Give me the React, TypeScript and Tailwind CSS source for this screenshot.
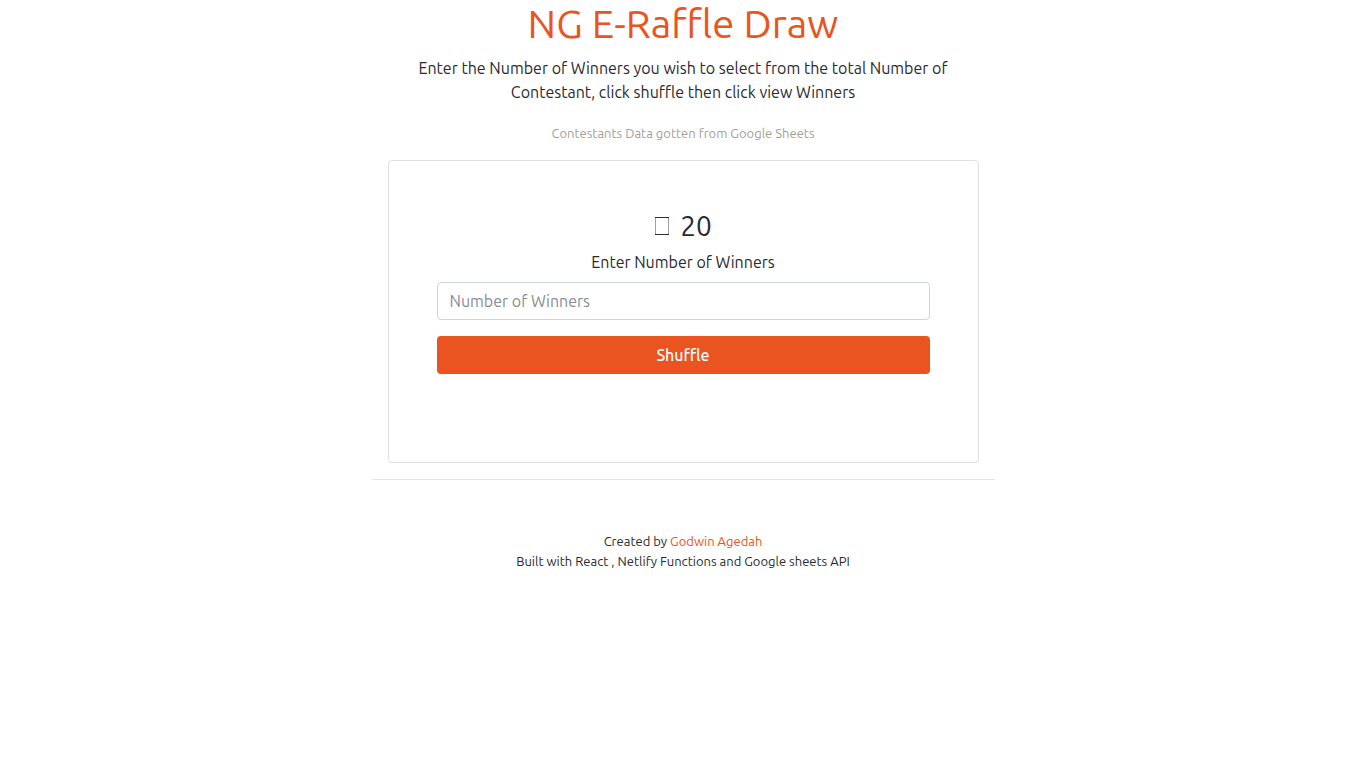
import React from "react";

export default function App() {
  return (
    <div className="min-h-screen bg-white font-['Ubuntu','Noto_Sans',sans-serif] text-base leading-6 text-[#2b2b2f]">
      <main className="mx-auto w-full max-w-[623px] text-center">
        <header className="px-4">
          <h1 className="mb-2 text-[40px] leading-12 font-normal text-[#e95420]">NG E-Raffle Draw</h1>
          <p className="mx-auto mb-4 max-w-[560px]">
            Enter the Number of Winners you wish to select from the total Number of Contestant, click shuffle then click
            view Winners
          </p>
          <p className="mb-[15px]">
            <small className="text-[13px] text-[#a59f98]">Contestants Data gotten from Google Sheets</small>
          </p>
        </header>
        <section className="mx-4 rounded border border-[#dfdfdf] px-12 pt-12 pb-22">
          <h2 className="mb-2 flex items-center justify-center gap-2.5 text-[28px] leading-[33px] font-normal">
            <svg width="16" height="18" viewBox="0 0 16 18" fill="none" stroke="currentColor" aria-hidden="true">
              <path d="M1 .5H15M1 17.5H15" />
              <path d="M1.5 1V17M14.5 1V17" opacity="0.45" />
            </svg>
            <span>20</span>
          </h2>
          <form onSubmit={(event) => event.preventDefault()}>
            <label htmlFor="winners" className="mb-2 block">
              Enter Number of Winners
            </label>
            <input
              id="winners"
              type="number"
              placeholder="Number of Winners"
              className="mb-4 block h-[38px] w-full rounded border border-[#ced4da] bg-white px-3 placeholder:text-[#868e96]"
            />
            <button type="submit" className="block h-[38px] w-full rounded bg-[#e95420] font-medium text-white">
              Shuffle
            </button>
          </form>
        </section>
        <hr className="my-4 border-black/10" />
        <footer className="pt-[35px] text-[13px] leading-5">
          <p>
            Created by{" "}
            <a href="#" className="text-[#e95420]">
              Godwin Agedah
            </a>
          </p>
          <p>Built with React , Netlify Functions and Google sheets API</p>
        </footer>
      </main>
    </div>
  );
}
